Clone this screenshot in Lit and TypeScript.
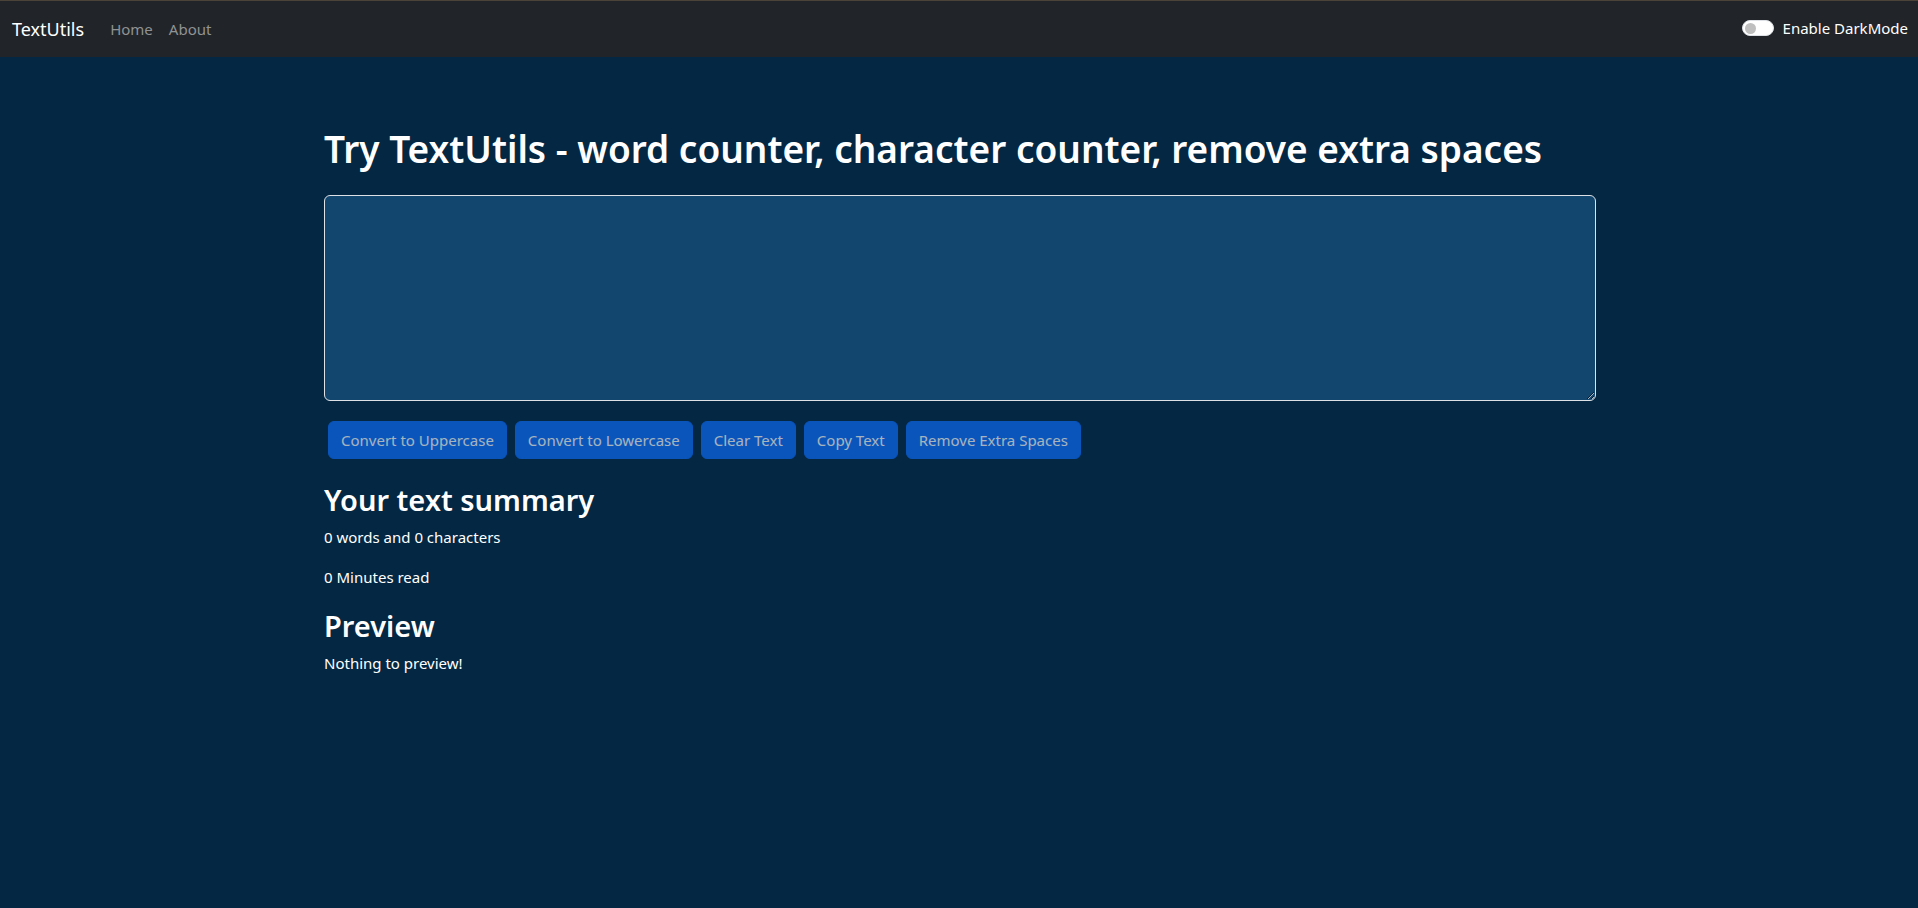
import { LitElement, html, css } from "lit";
import { customElement, state } from "lit/decorators.js";

@customElement("app-root")
class AppRoot extends LitElement {
  @state() private text = "";

  static styles = css`
    :host {
      display: block;
      min-height: 100vh;
      background: #042743;
      color: #fff;
      font-family: "Segoe UI", "Noto Sans", "Open Sans", sans-serif;
      font-size: 15px;
      line-height: 24px;
    }
    *,
    *::before {
      box-sizing: border-box;
    }
    .navbar {
      display: flex;
      align-items: center;
      padding: 8px 10px 8px 12px;
      border-top: 1px solid #4b4238;
      background: #212529;
    }
    .brand {
      margin-right: 18px;
      font-size: 18px;
      line-height: 30px;
      color: #fff;
      text-decoration: none;
    }
    .links {
      display: flex;
      flex: 1;
      margin: 0;
      padding: 0;
      list-style: none;
    }
    .link {
      display: block;
      padding: 8px;
      color: #909294;
      text-decoration: none;
    }
    .mode {
      display: flex;
      align-items: center;
      gap: 9px;
      margin-bottom: 2px;
    }
    .switch {
      appearance: none;
      display: flex;
      align-items: center;
      width: 32px;
      height: 16px;
      margin: 0;
      padding: 0 2px;
      border: 1px solid #dee2e6;
      border-radius: 16px;
      background: #fff;
    }
    .switch::before {
      content: "";
      width: 11px;
      height: 11px;
      border-radius: 50%;
      background: #bfbfbf;
    }
    .switch:checked {
      justify-content: flex-end;
      border-color: #0d6efd;
      background: #0d6efd;
    }
    .switch:checked::before {
      background: #fff;
    }
    .container {
      max-width: 1298px;
      margin: 0 auto;
      padding: 66px 12px 24px 14px;
    }
    h1,
    h2 {
      font-weight: 600;
    }
    h1 {
      margin: 0 0 20px;
      font-size: 37px;
      line-height: 52px;
    }
    h2 {
      margin: 0 0 5px;
      font-size: 29px;
      line-height: 41px;
    }
    p {
      margin: 0 0 16px;
    }
    .editor {
      display: block;
      width: 100%;
      padding: 6px 12px;
      border: 1px solid #dee2e6;
      border-radius: 6px;
      background: #13466e;
      color: #fff;
      font: inherit;
      resize: vertical;
    }
    .actions {
      display: flex;
      flex-wrap: wrap;
      gap: 8px;
      padding: 20px 4px;
    }
    .btn {
      padding: 6px 12px;
      border: 1px solid #0d6efd;
      border-radius: 6px;
      background: #0d6efd;
      color: #fff;
      font: inherit;
    }
    .btn:disabled {
      opacity: 0.65;
    }
  `;

  private actions: [string, () => void][] = [
    ["Convert to Uppercase", () => (this.text = this.text.toUpperCase())],
    ["Convert to Lowercase", () => (this.text = this.text.toLowerCase())],
    ["Clear Text", () => (this.text = "")],
    ["Copy Text", () => void navigator.clipboard.writeText(this.text)],
    ["Remove Extra Spaces", () => (this.text = this.text.split(/[ ]+/).join(" "))],
  ];

  render() {
    const words = this.text.split(/\s+/).filter(Boolean).length;
    return html`
      <nav class="navbar">
        <a class="brand" href="#">TextUtils</a>
        <ul class="links">
          <li><a class="link" href="#">Home</a></li>
          <li><a class="link" href="#about">About</a></li>
        </ul>
        <div class="mode">
          <input class="switch" type="checkbox" role="switch" id="mode" />
          <label for="mode">Enable DarkMode</label>
        </div>
      </nav>
      <main class="container">
        <h1 id="title">Try TextUtils - word counter, character counter, remove extra spaces</h1>
        <textarea
          class="editor"
          rows="8"
          aria-labelledby="title"
          .value=${this.text}
          @input=${(e: Event) => (this.text = (e.target as HTMLTextAreaElement).value)}
        ></textarea>
        <div class="actions">
          ${this.actions.map(
            ([label, run]) => html`
              <button class="btn" type="button" ?disabled=${this.text.length === 0} @click=${run}>${label}</button>
            `
          )}
        </div>
        <h2>Your text summary</h2>
        <p>${words} words and ${this.text.length} characters</p>
        <p>${0.008 * words} Minutes read</p>
        <h2>Preview</h2>
        <p>${this.text || "Nothing to preview!"}</p>
      </main>
    `;
  }
}
